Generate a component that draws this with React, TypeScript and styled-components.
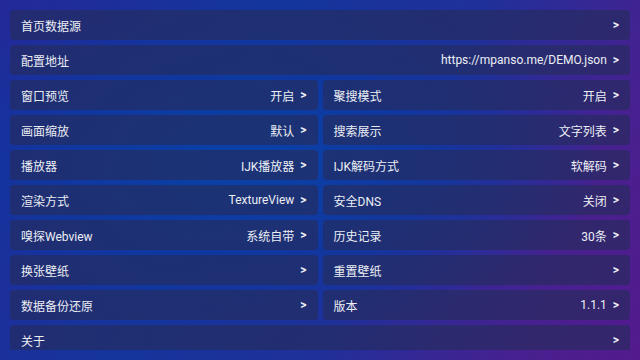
import React from "react";
import styled, { createGlobalStyle } from "styled-components";

const Global = createGlobalStyle`
  html, body { margin: 0; padding: 0; width: 640px; height: 360px; overflow: hidden; }
  body { font-family: Roboto, "Noto Sans CJK SC", sans-serif; }
`;

const Page = styled.div`
  width: 640px;
  height: 360px;
  box-sizing: border-box;
  padding: 10px;
  background:
    radial-gradient(ellipse 70% 60% at 38% 45%, rgba(8, 66, 168, 0.95) 0%, rgba(10, 58, 160, 0.6) 45%, rgba(10, 58, 160, 0) 80%),
    linear-gradient(115deg, #23299a 0%, #15359c 35%, #20309a 60%, #48208f 85%, #531a8e 100%);
  overflow: hidden;
`;

const List = styled.div`
  height: 340px;
  overflow: hidden;
  display: grid;
  grid-template-columns: 1fr 1fr;
  grid-auto-rows: 30px;
  gap: 5px;
  align-content: start;
`;

const Row = styled.div<{ $full?: boolean }>`
  grid-column: ${(p) => (p.$full ? "1 / span 2" : "auto")};
  display: flex;
  align-items: center;
  justify-content: space-between;
  padding: 0 11px;
  border-radius: 4px;
  background: rgba(38, 44, 90, 0.64);
  color: #eceef4;
  font-size: 12px;
  white-space: nowrap;
`;

const Label = styled.span``;

const Value = styled.span`
  display: flex;
  align-items: center;
  gap: 6px;
`;

const Arrow = styled.span`
  font-size: 12px;
  font-weight: 700;
`;

type Item = { label: string; value?: string; full?: boolean };

const items: Item[] = [
  { label: "首页数据源", full: true },
  { label: "配置地址", value: "https://mpanso.me/DEMO.json", full: true },
  { label: "窗口预览", value: "开启" },
  { label: "聚搜模式", value: "开启" },
  { label: "画面缩放", value: "默认" },
  { label: "搜索展示", value: "文字列表" },
  { label: "播放器", value: "IJK播放器" },
  { label: "IJK解码方式", value: "软解码" },
  { label: "渲染方式", value: "TextureView" },
  { label: "安全DNS", value: "关闭" },
  { label: "嗅探Webview", value: "系统自带" },
  { label: "历史记录", value: "30条" },
  { label: "换张壁纸" },
  { label: "重置壁纸" },
  { label: "数据备份还原" },
  { label: "版本", value: "1.1.1" },
  { label: "关于", full: true },
];

export default function App() {
  return (
    <>
      <Global />
      <Page>
        <List>
          {items.map((it) => (
            <Row key={it.label} $full={it.full}>
              <Label>{it.label}</Label>
              <Value>
                {it.value && <span>{it.value}</span>}
                <Arrow>&gt;</Arrow>
              </Value>
            </Row>
          ))}
        </List>
      </Page>
    </>
  );
}
